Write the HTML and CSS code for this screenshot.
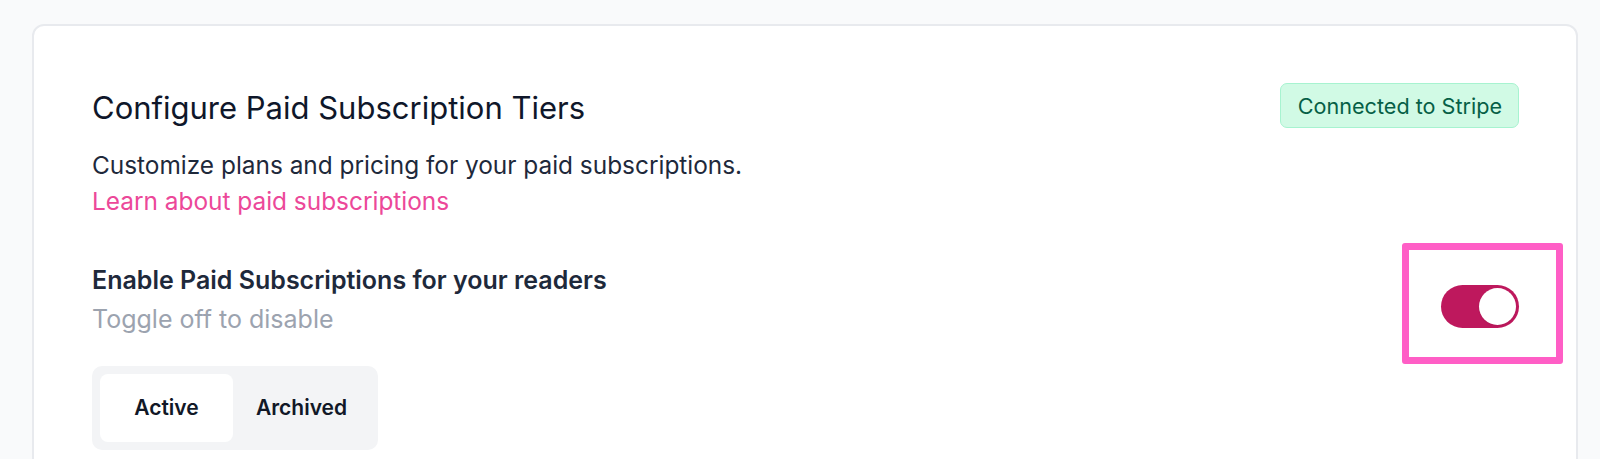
FILE: index.html
```html
<!DOCTYPE html>
<html lang="en">
<head>
<meta charset="utf-8">
<title>Configure Paid Subscription Tiers</title>
<link rel="stylesheet" href="styles.css">
</head>
<body>
<main class="card">
  <header class="card-header">
    <div class="intro">
      <h1 class="title">Configure Paid Subscription Tiers</h1>
      <p class="desc">Customize plans and pricing for your paid subscriptions.</p>
      <a class="link" href="#">Learn about paid subscriptions</a>
    </div>
    <span class="badge">Connected to Stripe</span>
  </header>

  <section class="setting">
    <div class="setting-text">
      <div class="setting-label">Enable Paid Subscriptions for your readers</div>
      <div class="setting-hint">Toggle off to disable</div>
    </div>
    <div class="toggle-wrap">
      <button class="toggle" type="button" aria-pressed="true"><span class="knob"></span></button>
      <span class="highlight"></span>
    </div>
  </section>

  <nav class="tabs">
    <button class="tab tab-active" type="button">Active</button>
    <button class="tab" type="button">Archived</button>
  </nav>
</main>
</body>
</html>
```

FILE: styles.css
```css
* { box-sizing: border-box; }

html, body {
  margin: 0;
  padding: 0;
  background: #f9fafb;
  font-family: Inter, "Noto Sans", "Liberation Sans", sans-serif;
  overflow: hidden;
}

body { height: 459px; }

.card {
  margin: 24px 0 0 32px;
  width: 1546px;
  min-height: 500px;
  background: #ffffff;
  border: 2px solid #e8eaee;
  border-radius: 12px;
  padding: 57px 57px 0 58px;
}

.card-header {
  display: flex;
  justify-content: space-between;
  align-items: flex-start;
}

.intro { display: flex; flex-direction: column; align-items: flex-start; }

.title {
  margin: 7px 0 0 0;
  font-size: 31px;
  line-height: 35px;
  font-weight: 400;
  color: #0f172a;
}

.desc {
  margin: 23px 0 0 0;
  font-size: 24.4px;
  line-height: 35px;
  color: #1e293b;
}

.link {
  margin-top: 1px;
  font-size: 24.4px;
  line-height: 35px;
  color: #ec4899;
  text-decoration: none;
}

.badge {
  display: inline-flex;
  align-items: center;
  height: 45px;
  padding: 0 16px 0 17px;
  background: #d1fae5;
  border: 1.5px solid #a7f3d0;
  border-radius: 7px;
  color: #065f46;
  font-size: 21.6px;
}

.setting {
  display: flex;
  justify-content: space-between;
  align-items: flex-start;
  margin-top: 44px;
}

.setting-label {
  font-size: 25px;
  line-height: 35px;
  font-weight: 600;
  color: #1e293b;
}

.setting-hint {
  margin-top: 4px;
  font-size: 25px;
  line-height: 35px;
  color: #9ca3af;
}

.toggle-wrap {
  position: relative;
  margin-top: 21.6px;
}

.toggle {
  display: flex;
  align-items: center;
  justify-content: flex-end;
  width: 78px;
  height: 43px;
  padding: 0 3px;
  border: 0;
  border-radius: 22px;
  background: #be185d;
}

.knob {
  width: 37px;
  height: 37px;
  border-radius: 50%;
  background: #ffffff;
  box-shadow: 0 1px 2px rgba(0,0,0,0.08);
}

.highlight {
  position: absolute;
  left: -39px;
  top: -42px;
  right: -44px;
  bottom: -36px;
  border: 7px solid #ff5ec6;
  border-radius: 3px;
  pointer-events: none;
}

.tabs {
  display: inline-grid;
  grid-template-columns: 133px 137px;
  margin-top: 28.6px;
  padding: 8px;
  background: #f3f4f6;
  border-radius: 10px;
}

.tab {
  height: 68px;
  border: 0;
  border-radius: 8px;
  background: transparent;
  font-family: inherit;
  font-size: 21px;
  font-weight: 600;
  color: #111827;
}

.tab-active { background: #ffffff; }
```
